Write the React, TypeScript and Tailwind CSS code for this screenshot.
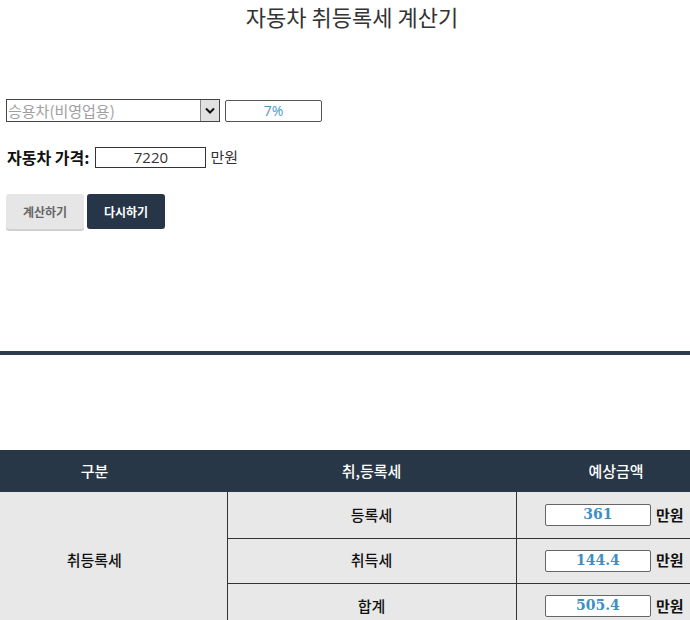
import React, { useState } from 'react';

const KR = { fontFamily: '"Noto Sans CJK KR", "Noto Sans", sans-serif' };

const rows = [
  { name: '등록세', value: '361' },
  { name: '취득세', value: '144.4' },
  { name: '합계', value: '505.4' },
];

const App: React.FC = () => {
  const [carType, setCarType] = useState('비영업용');
  const [price, setPrice] = useState('7220');

  return (
    <div className="w-[690px] h-[620px] overflow-hidden bg-white text-[#222]" style={KR}>

      {/* ── TITLE ── */}
      <h1 className="text-center text-[22px] leading-[30px] text-[#333] pt-[1px] pl-[14px]">자동차 취등록세 계산기</h1>

      {/* ── FORM ── */}
      <div className="pl-[6px] pt-[68px]">

        <div className="flex items-center gap-[5px]">
          <div className="flex w-[214px] h-[23px] border border-[#444] bg-white">
            <select
              value={carType}
              onChange={e => setCarType(e.target.value)}
              className="flex-1 appearance-none bg-white text-[15px] leading-[21px] text-[#a0a0a0] pl-[1px] outline-none"
              style={KR}
            >
              <option value="비영업용">승용차(비영업용)</option>
              <option value="영업용">승용차(영업용)</option>
            </select>
            <div className="w-[19px] bg-[#e1e1e1] border-l border-[#888] flex items-center justify-center">
              <svg width="10" height="7" viewBox="0 0 10 7">
                <path d="M1 1.5 L5 5.5 L9 1.5" fill="none" stroke="#111" strokeWidth="2" />
              </svg>
            </div>
          </div>
          <div className="w-[97px] h-[22px] border border-[#555] rounded-[2px] flex items-center justify-center text-[14px] text-[#4a9bcb]" style={{ fontFamily: '"Open Sans", "Noto Sans", sans-serif' }}>
            7%
          </div>
        </div>

        <div className="flex items-center mt-[24px] h-[22px]">
          <span className="text-[16px] font-semibold text-[#111] mr-[6px] ml-[1px]">자동차 가격:</span>
          <input
            value={price}
            onChange={e => setPrice(e.target.value)}
            className="w-[111px] h-[21px] border border-[#333] text-center text-[15px] text-[#333] outline-none"
            style={{ fontFamily: '"Open Sans", "Noto Sans", sans-serif' }}
          />
          <span className="text-[15px] text-[#333] ml-[4px]">만원</span>
        </div>

        <div className="flex gap-[3px] mt-[26px]">
          <button className="w-[78px] h-[35px] rounded-[3px] bg-[#e6e6e6] text-[12px] font-bold text-[#666] shadow-[0_2px_0_#cfcfcf]">
            계산하기
          </button>
          <button className="w-[78px] h-[35px] rounded-[3px] bg-[#263547] text-[12px] font-bold text-white">
            다시하기
          </button>
        </div>
      </div>

      {/* ── DIVIDER ── */}
      <div className="mt-[122px] h-[4px] bg-[#2b3a4c]"></div>

      {/* ── RESULT TABLE ── */}
      <div className="mt-[95px] overflow-hidden">
        <table className="ml-[-38px] w-[754px] border-collapse table-fixed text-[15px]">
          <colgroup>
            <col className="w-[265px]" />
            <col className="w-[289px]" />
            <col className="w-[200px]" />
          </colgroup>
          <thead>
            <tr className="bg-[#283747] text-white h-[42px]">
              <th className="font-medium">구분</th>
              <th className="font-medium">취,등록세</th>
              <th className="font-medium">예상금액</th>
            </tr>
          </thead>
          <tbody className="bg-[#e8e8e8] text-[#111]">
            {rows.map((row, i) => (
              <tr key={row.name} className={i === 0 ? 'h-[46px]' : 'h-[45px] border-t border-[#333]'}>
                {i === 0 && (
                  <td rowSpan={3} className="text-center font-medium border-r border-[#333]">취등록세</td>
                )}
                <td className="text-center font-medium border-r border-[#333]">{row.name}</td>
                <td>
                  <div className="flex items-center justify-center gap-[5px] pr-[4px]">
                    <div
                      className="w-[106px] h-[22px] bg-white border border-[#666] rounded-[2px] flex items-center justify-center text-[14px] font-bold text-[#3d8fc4]"
                      style={{ fontFamily: '"DejaVu Serif", serif' }}
                    >
                      {row.value}
                    </div>
                    <span className="font-bold text-[15px]">만원</span>
                  </div>
                </td>
              </tr>
            ))}
          </tbody>
        </table>
      </div>

    </div>
  );
};

export default App;
